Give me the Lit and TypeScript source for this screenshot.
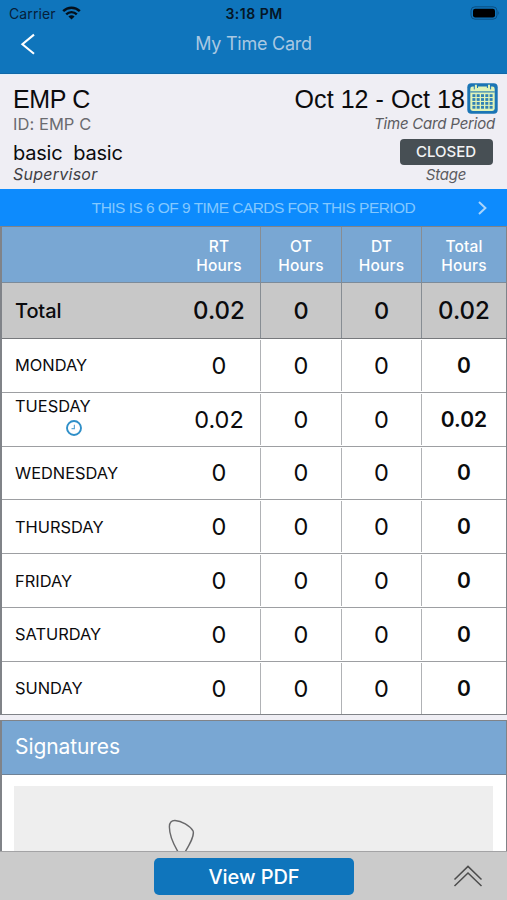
import { LitElement, html, css, svg } from "lit";
import { customElement, property } from "lit/decorators.js";
import { classMap } from "lit/directives/class-map.js";

interface DayRow {
  day: string;
  rt: string;
  ot: string;
  dt: string;
  total: string;
  clock?: boolean;
}

const DAYS: DayRow[] = [
  { day: "MONDAY", rt: "0", ot: "0", dt: "0", total: "0" },
  { day: "TUESDAY", rt: "0.02", ot: "0", dt: "0", total: "0.02", clock: true },
  { day: "WEDNESDAY", rt: "0", ot: "0", dt: "0", total: "0" },
  { day: "THURSDAY", rt: "0", ot: "0", dt: "0", total: "0" },
  { day: "FRIDAY", rt: "0", ot: "0", dt: "0", total: "0" },
  { day: "SATURDAY", rt: "0", ot: "0", dt: "0", total: "0" },
  { day: "SUNDAY", rt: "0", ot: "0", dt: "0", total: "0" },
];

@customElement("nav-header")
class NavHeader extends LitElement {
  static styles = css`
    :host {
      display: block;
      height: 74px;
      flex: none;
      background: #0f75bc;
      box-sizing: border-box;
      border-bottom: 1px solid #1068a8;
    }
    .status {
      display: grid;
      grid-template-columns: 1fr auto 1fr;
      align-items: center;
      height: 27px;
      padding: 0 7px 0 9px;
      font-size: 14px;
      color: #06203a;
    }
    .carrier {
      display: flex;
      align-items: center;
      gap: 6px;
      letter-spacing: 0.1px;
    }
    .wifi {
      margin-top: -2px;
    }
    .time {
      font-weight: 600;
      color: #041626;
      letter-spacing: 0.5px;
      margin-right: 1px;
    }
    .battery {
      justify-self: end;
      margin-top: -1px;
    }
    .bar {
      display: grid;
      grid-template-columns: 60px 1fr 60px;
      align-items: center;
      height: 34px;
    }
    .back {
      margin-left: 20px;
    }
    .title {
      text-align: center;
      margin-top: -2px;
      font-size: 18px;
      color: #a9c8e2;
      letter-spacing: -0.25px;
    }
    svg {
      display: block;
    }
  `;
  render() {
    return html`
      <div class="status">
        <div class="carrier">
          <span>Carrier</span>
          <svg class="wifi" width="19" height="14" viewBox="0 0 19 14" fill="none" stroke="#04101c">
            <path d="M1.2 5.2 C5.8 .6 13.2 .6 17.8 5.2" stroke-width="2.5" />
            <path d="M4.2 8.3 C7.2 5.4 11.8 5.4 14.8 8.3" stroke-width="2.4" />
            <path d="M9.5 13.6 L6.4 10.4 C8.2 8.9 10.8 8.9 12.6 10.4 Z" fill="#04101c" stroke="none" />
          </svg>
        </div>
        <span class="time">3:18 PM</span>
        <svg class="battery" width="30" height="14" viewBox="0 0 30 14">
          <rect x="1" y=".8" width="26" height="12.4" rx="4" fill="none" stroke="#0b4f82" />
          <rect x="3" y="2.7" width="22" height="8.8" rx="2.2" fill="#000" />
          <path d="M28.4 5 q1.6 2 0 4z" fill="#0b4f82" />
        </svg>
      </div>
      <div class="bar">
        <svg class="back" width="17" height="22" viewBox="0 0 17 22" fill="none" stroke="#fff" stroke-width="2.1">
          <path d="M14 1.6 L2.4 11.2 L14 20.8" />
        </svg>
        <span class="title">My Time Card</span>
      </div>
    `;
  }
}

@customElement("calendar-icon")
class CalendarIcon extends LitElement {
  static styles = css`
    :host {
      display: block;
    }
    svg {
      display: block;
    }
  `;
  render() {
    const cells = [];
    for (let r = 0; r < 4; r++) {
      for (let c = 0; c < 5; c++) {
        cells.push(svg`<rect x=${5.4 + c * 4.3} y=${11.2 + r * 3.9} width="3" height="2.8" fill="#3181b4" />`);
      }
    }
    return html`<svg width="31" height="31" viewBox="0 0 31 31">
      <rect x=".3" y=".3" width="30.4" height="30.4" rx="4" fill="#1b75b5" />
      <rect x="3.3" y="3.6" width="24.4" height="24.4" rx="2.4" fill="#e0f3b8" />
      <path d="M3.3 8.9 H27.7" stroke="#2f82b4" stroke-width="1.2" />
      <path d="M7.3 2 v4.4 M10.5 2 v3 M20.4 2 v3 M23.6 2 v4.4" stroke="#1b75b5" stroke-width="1" />
      <path d="M8.9 1.8 V6 M22 1.8 V6" stroke="#e0f3b8" stroke-width="2" />
      ${cells}
    </svg>`;
  }
}

@customElement("employee-summary")
class EmployeeSummary extends LitElement {
  static styles = css`
    :host {
      display: flex;
      justify-content: space-between;
      height: 115px;
      flex: none;
      box-sizing: border-box;
      padding: 8px 9px 0 13px;
      background: #efeef4;
      border-top: 1px solid #e3f0fa;
      color: #0b0b0d;
      white-space: pre;
    }
    .left,
    .right {
      display: flex;
      flex-direction: column;
    }
    .right {
      align-items: flex-end;
    }
    .name {
      font: 25px/33px "Liberation Sans", sans-serif;
      letter-spacing: -0.35px;
    }
    .id {
      font-size: 16.5px;
      line-height: 16px;
      color: #6b6b70;
      letter-spacing: 0.05px;
    }
    .sup {
      font-size: 20px;
      line-height: 24px;
      margin-top: 9px;
      letter-spacing: -0.22px;
    }
    .cap {
      font-style: italic;
      font-size: 16px;
      line-height: 19px;
      color: #3f3f44;
      letter-spacing: 0.25px;
    }
    .period {
      display: flex;
      align-items: center;
      gap: 2px;
      height: 33px;
      font: 25px/33px "Liberation Sans", sans-serif;
      letter-spacing: 0.06px;
    }
    .calendar {
      margin-top: -2px;
    }
    .muted {
      font-style: italic;
      font-size: 15px;
      line-height: 16px;
      color: #5c5c61;
      letter-spacing: -0.2px;
      margin-right: 3px;
    }
    .stage {
      display: flex;
      flex-direction: column;
      align-items: center;
      margin: 7px 5.5px 0 0;
    }
    .badge {
      width: 93px;
      height: 26px;
      border-radius: 4px;
      background: #474f54;
      color: #f3f4f5;
      font-size: 15px;
      font-weight: 500;
      line-height: 26px;
      text-align: center;
    }
    .stage .muted {
      margin: 2px 0 0;
    }
  `;
  render() {
    return html`
      <div class="left">
        <span class="name">EMP C</span>
        <span class="id">ID: EMP C</span>
        <span class="sup">basic  basic</span>
        <span class="cap">Supervisor</span>
      </div>
      <div class="right">
        <div class="period"><span>Oct 12 - Oct 18</span><calendar-icon class="calendar"></calendar-icon></div>
        <span class="muted">Time Card Period</span>
        <div class="stage">
          <span class="badge">CLOSED</span>
          <span class="muted">Stage</span>
        </div>
      </div>
    `;
  }
}

@customElement("hours-table")
class HoursTable extends LitElement {
  static styles = css`
    :host {
      display: block;
      flex: none;
      box-sizing: border-box;
      height: 489px;
      border: 1px solid #808388;
      border-left-width: 2px;
      background: #fff;
      color: #0b0b0d;
    }
    .row {
      display: grid;
      grid-template-columns: 258px 81px 80px 1fr;
      height: 53.8px;
      box-sizing: border-box;
      border-bottom: 1px solid #9d9fa2;
      padding: 1px 0;
    }
    .row:last-child {
      height: 53.2px;
      border-bottom: 0;
    }
    .head {
      height: 56px;
      padding: 0;
      background: #79a7d3;
      border-bottom-color: #7c8b9a;
      color: #fff;
    }
    .sum {
      height: 56px;
      padding: 0;
      background: #c8c8c8;
      border-bottom-color: #77797c;
    }
    .first {
      display: grid;
      grid-template-columns: 176px 82px;
      align-items: center;
    }
    .cell {
      display: flex;
      align-items: center;
      justify-content: center;
      text-align: center;
      border-left: 1px solid #b0b2b5;
      font-size: 23.5px;
    }
    .rt {
      text-align: center;
      font-size: 23.5px;
    }
    .head .cell,
    .sum .cell {
      border-left-color: #878d93;
    }
    .head .cell,
    .head .rt {
      font-size: 15.5px;
      line-height: 19px;
      font-weight: 500;
      letter-spacing: 0.15px;
      padding-top: 2px;
    }
    .sum .cell,
    .sum .rt {
      font-weight: 500;
    }
    .sum .rt,
    .sum .total {
      font-size: 24px;
    }
    .label {
      padding-left: 13px;
      font-size: 16.4px;
    }
    .label.withclock {
      align-self: start;
      padding-top: 2px;
      line-height: 20px;
    }
    .clock {
      display: block;
      margin: 3px 0 0 50px;
    }
    .sum .label {
      font-size: 20px;
      font-weight: 500;
      letter-spacing: -0.1px;
    }
    .total {
      font-weight: 600;
      font-size: 21px;
    }
  `;
  render() {
    return html`
      <div class="row head">
        <div class="first"><span></span><span class="rt">RT<br />Hours</span></div>
        <div class="cell">OT<br />Hours</div>
        <div class="cell">DT<br />Hours</div>
        <div class="cell">Total<br />Hours</div>
      </div>
      <div class="row sum">
        <div class="first"><span class="label">Total</span><span class="rt">0.02</span></div>
        <div class="cell">0</div>
        <div class="cell">0</div>
        <div class="cell total">0.02</div>
      </div>
      ${DAYS.map(
        (d) => html`<div class="row">
          <div class="first">
            <div class=${classMap({ label: true, withclock: !!d.clock })}>
              ${d.day}
              ${d.clock
                ? html`<svg class="clock" width="18" height="18" viewBox="0 0 18 18" fill="none" stroke="#2f8fc8">
                    <circle cx="9" cy="9" r="7" stroke-width="1.9" />
                    <path d="M9.4 5.8 V9.6 H6.5" stroke-width="1.2" stroke="#5fa9d6" />
                  </svg>`
                : null}
            </div>
            <span class="rt">${d.rt}</span>
          </div>
          <div class="cell">${d.ot}</div>
          <div class="cell">${d.dt}</div>
          <div class="cell total">${d.total}</div>
        </div>`
      )}
    `;
  }
}

@customElement("signature-panel")
class SignaturePanel extends LitElement {
  static styles = css`
    :host {
      display: flex;
      flex-direction: column;
      flex: 1;
      min-height: 0;
      margin-top: 5px;
      border: 1px solid #808388;
      border-left-width: 2px;
      border-bottom: 0;
      background: #fff;
    }
    .title {
      flex: none;
      height: 53px;
      line-height: 52px;
      padding-left: 13px;
      background: #79a7d3;
      border-bottom: 1px solid #6f8296;
      color: #fff;
      font-size: 21px;
      letter-spacing: -0.08px;
    }
    .pad {
      flex: 1;
      min-height: 0;
      margin: 11px 13px 0 12px;
      background: #eee;
      overflow: hidden;
    }
    .ink {
      display: block;
      margin: 31px 0 0 152px;
    }
  `;
  render() {
    return html`
      <div class="title">Signatures</div>
      <div class="pad">
        <svg class="ink" width="32" height="40" viewBox="0 0 32 40" fill="none" stroke="#68686a" stroke-width="1.4">
          <path d="M12.4 35.5 C7 26.5 3.2 19 3.4 9.5 C3.6 5 5.4 3.4 9 3.5 C15.5 3.8 24 8.5 27 13.8 C29 18.5 23.5 27.5 18.8 35.5" />
        </svg>
      </div>
    `;
  }
}

@customElement("app-root")
class AppRoot extends LitElement {
  @property({ type: Number }) index = 6;
  @property({ type: Number }) count = 9;

  static styles = css`
    :host {
      display: flex;
      flex-direction: column;
      width: 507px;
      height: 900px;
      overflow: hidden;
      background: #efeef4;
      font-family: Inter, "Liberation Sans", sans-serif;
    }
    .banner {
      display: grid;
      grid-template-columns: 60px 1fr 60px;
      align-items: center;
      flex: none;
      height: 37px;
      background: #0d8bfd;
      color: #83c8ff;
      font: 15.5px "Liberation Sans", sans-serif;
      text-align: center;
    }
    .banner-text {
      grid-column: 2;
      white-space: nowrap;
      letter-spacing: -0.54px;
    }
    .next {
      justify-self: end;
      margin-right: 19px;
    }
    .footer {
      display: grid;
      grid-template-columns: 154px 200px 1fr;
      align-items: center;
      flex: none;
      height: 49px;
      box-sizing: border-box;
      border-top: 1px solid #a3a3a5;
      background: #cbcbcb;
    }
    .pdf {
      grid-column: 2;
      height: 37px;
      margin-top: 1px;
      padding: 0;
      border: 0;
      border-radius: 5px;
      background: #0f75bc;
      color: #fff;
      font: 500 20px Inter, sans-serif;
      letter-spacing: -0.05px;
    }
    .up {
      justify-self: end;
      margin-right: 23px;
    }
  `;
  render() {
    return html`
      <nav-header></nav-header>
      <employee-summary></employee-summary>
      <div class="banner">
        <span class="banner-text">THIS IS ${this.index} OF ${this.count} TIME CARDS FOR THIS PERIOD</span>
        <svg class="next" width="12" height="16" viewBox="0 0 12 16" fill="none" stroke="#a9d4fb" stroke-width="2">
          <path d="M3 2 L9.4 8 L3 14" />
        </svg>
      </div>
      <hours-table></hours-table>
      <signature-panel></signature-panel>
      <div class="footer">
        <button class="pdf">View PDF</button>
        <svg class="up" width="32" height="26" viewBox="0 0 32 26" fill="none" stroke="#4d4d4d" stroke-width="1.5">
          <path d="M2.5 16.5 L16 3.4 L29.5 16.5 M2.5 23 L16 10 L29.5 23" />
        </svg>
      </div>
    `;
  }
}
